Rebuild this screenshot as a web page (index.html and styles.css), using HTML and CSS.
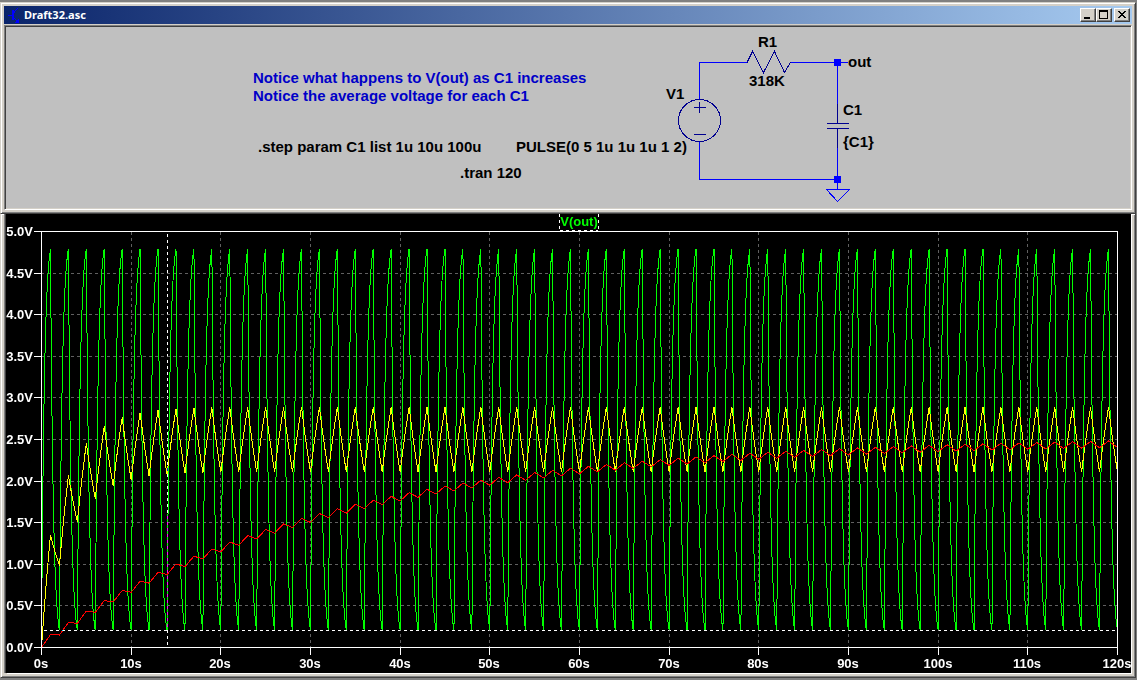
FILE: index.html
```html
<!DOCTYPE html>
<html lang="en">
<head>
  <meta charset="UTF-8">
  <meta name="viewport" content="width=device-width, initial-scale=1" />
  <title>Draft32.asc</title>
  <link rel="stylesheet" href="styles.css">
</head>
<body>
  <section class="window schematic-window">
    <header class="title-bar">
      <svg class="app-icon" width="12" height="16" viewBox="0 0 12 16" shape-rendering="crispEdges">
        <path d="M0 8.5H5M10 1L5 6.5M5 10L10 15" />
        <path class="thick" d="M5 3V13" />
        <path class="arrow" d="M11 16V12L7 15.5Z" />
      </svg>
      <h1>Draft32.asc</h1>
      <div class="window-buttons">
        <button type="button" aria-label="Minimize">
          <svg width="12" height="10" viewBox="0 0 12 10" shape-rendering="crispEdges"><path d="M2 7H8V9H2Z" /></svg>
        </button>
        <button type="button" aria-label="Maximize">
          <svg width="12" height="10" viewBox="0 0 12 10" shape-rendering="crispEdges"><path fill-rule="evenodd" d="M1 0H10V9H1ZM2 2V8H9V2Z" /></svg>
        </button>
        <button type="button" class="close" aria-label="Close">
          <svg width="12" height="10" viewBox="0 0 12 10" shape-rendering="crispEdges"><path d="M2 1H4V2H5V3H7V2H8V1H10V2H9V3H8V4H7V5H8V6H9V7H10V8H8V7H7V6H5V7H4V8H2V7H3V6H4V5H5V4H4V3H3V2H2Z" /></svg>
        </button>
      </div>
    </header>
    <div class="schematic">
      <svg class="circuit" width="680" height="182" viewBox="230 27 680 182" role="img" aria-label="RC circuit">
        <g class="comment">
          <text x="253" y="83">Notice what happens to V(out) as C1 increases</text>
          <text x="253" y="101">Notice the average voltage for each C1</text>
        </g>
        <g class="label">
          <text x="258" y="152">.step param C1 list 1u 10u 100u</text>
          <text x="516" y="152">PULSE(0 5 1u 1u 1u 1 2)</text>
          <text x="460" y="178">.tran 120</text>
          <text x="666" y="99">V1</text>
          <text x="758" y="47">R1</text>
          <text x="749" y="86">318K</text>
          <text x="848" y="67">out</text>
          <text x="843" y="115">C1</text>
          <text x="843" y="147">{C1}</text>
        </g>
        <!-- wires -->
        <path class="wire" d="M699.5 99V62.5H747M791 62.5H848M837.5 62V104M837.5 148V189M699.5 141V179.5H837" />
        <!-- R1, V1, C1 -->
        <path class="part" d="M747 62.5L752.5 51.5L763.5 72.5L774.5 51.5L784.5 72.5L790.5 62.5" />
        <circle class="part" cx="699.5" cy="120.5" r="21" />
        <path class="part" d="M694 107.5H706M699.5 102V113M694 134.5H706" />
        <path class="part" d="M837.5 104V123.5M827 123.5H849M827 128.5H849M837.5 128V148" />
        <path class="wire" d="M826.5 189.5H849.5L837.5 201.5Z" />
        <path class="node" d="M834 59H841V66H834ZM834 176H841V183H834Z" />
      </svg>
    </div>
  </section>

  <section class="window plot-window">
    <svg class="plot" viewBox="6 214 1125 459" role="img" aria-label="V(out) over time">
      <g id="grid"></g>
      <g id="traces"></g>
      <path class="axis" d="M41.5 231.5H1117.5V647.5H41.5Z" />
      <g id="axes"></g>
      <g class="cursor">
        <path d="M167.5 234V647" />
        <path d="M44 630.5H1117" />
      </g>
      <path class="trace-box" d="M559.5 214V230M598.5 214V230M560 230.5H598" />
      <text class="trace-name" x="579" y="226">V(out)</text>
    </svg>
  </section>

  <script>
    const left = 41.5;
    const bottom = 647.5;
    const pxPerSecond = 1076 / 120;
    const pxPerVolt = 416 / 5;
    const resistance = 318e3;

    const x = (t) => left + t * pxPerSecond;
    const y = (v) => bottom - v * pxPerVolt;

    const add = (parent, tag, attrs, text) => {
      const el = document.createElementNS('http://www.w3.org/2000/svg', tag);
      for (const key in attrs) el.setAttribute(key, attrs[key]);
      if (text) el.textContent = text;
      document.getElementById(parent).appendChild(el);
    };

    // RC response to a 5V square wave, 1s on and 1s off
    const response = (capacitance) => {
      const tau = resistance * capacitance;
      const steps = 20;
      const points = [`${x(0)},${y(0)}`];
      let start = 0;
      for (let second = 0; second < 120; second++) {
        const target = second % 2 === 0 ? 5 : 0;
        let v = start;
        for (let i = 1; i <= steps; i++) {
          v = target + (start - target) * Math.exp(-i / steps / tau);
          points.push(`${x(second + i / steps).toFixed(2)},${y(v).toFixed(2)}`);
        }
        start = v;
      }
      return points.join(' ');
    };

    for (let i = 0; i <= 10; i++) {
      const py = Math.floor(y(i / 2)) + 0.5;
      if (i > 0 && i < 10) add('grid', 'path', { d: `M41 ${py}H1117` });
      add('axes', 'path', { class: 'axis', d: `M34 ${py}H41` });
      add('axes', 'text', { class: 'volts', x: 33, y: Math.floor(py) + 5 }, `${(i / 2).toFixed(1)}V`);
    }

    for (let s = 0; s <= 120; s += 10) {
      const px = Math.floor(x(s)) + 0.5;
      if (s > 0 && s < 120) add('grid', 'path', { d: `M${px} 232V647` });
      add('axes', 'path', { class: 'axis', d: `M${px} 648V655` });
      add('axes', 'text', { class: 'seconds', x: Math.floor(px), y: 668 }, `${s}s`);
    }

    add('traces', 'polyline', { class: 'c-1u', points: response(1e-6) });
    add('traces', 'polyline', { class: 'c-10u', points: response(10e-6) });
    add('traces', 'polyline', { class: 'c-100u', points: response(100e-6) });
  </script>
</body>
</html>
```
FILE: styles.css
```css
* {
  box-sizing: border-box;
}

body {
  margin: 0;
  padding: 2px 1px 2px 0;
  min-height: 100vh;
  display: flex;
  flex-direction: column;
  background: #808080;
  font-family: "Liberation Sans", Arial, sans-serif;
}

.window {
  border: 1px solid #d4d0c8;
  border-right-color: #404040;
  border-bottom-color: #404040;
  background: #d4d0c8;
  box-shadow: inset 1px 1px #fff, inset -1px -1px #808080;
}

.schematic-window {
  padding: 3px;
}

.title-bar {
  height: 18px;
  display: flex;
  align-items: center;
  gap: 4px;
  padding: 0 2px 0 4px;
  background: linear-gradient(to right, #0a246a, #a6caf0);
}

.title-bar h1 {
  flex: 1;
  margin: 0;
  color: #fff;
  font: bold 11px/18px "Noto Sans", Tahoma, sans-serif;
}

.app-icon path {
  fill: none;
  stroke: #00f;
}

.app-icon .thick {
  stroke-width: 2;
}

.app-icon .arrow {
  fill: #00f;
  stroke: none;
}

.window-buttons {
  display: flex;
}

.window-buttons button {
  width: 16px;
  height: 14px;
  padding: 1px;
  border: 1px solid #fff;
  border-right-color: #404040;
  border-bottom-color: #404040;
  background: #d4d0c8;
  box-shadow: inset -1px -1px #808080;
}

.window-buttons svg {
  display: block;
}

.window-buttons .close {
  margin-left: 2px;
}

.schematic {
  margin-top: 1px;
  border: 1px solid #808080;
  border-right-color: #fff;
  border-bottom-color: #fff;
  padding: 1px 0 0 225px;
  background: #c0c0c0;
  box-shadow: inset 1px 1px #404040, inset -1px -1px #d4d0c8;
  overflow: hidden;
}

.circuit {
  display: block;
  shape-rendering: crispEdges;
}

.circuit text {
  font-size: 15px;
  font-weight: bold;
}

.comment {
  fill: #0000c8;
}

.wire,
.part {
  fill: none;
  stroke: #00f;
}

.part {
  stroke: #000090;
}

.node {
  fill: #00f;
}

.plot-window {
  flex: 1;
  display: flex;
  border-top: 0;
  padding: 0 4px 4px 5px;
}

.plot {
  flex: 1;
  min-width: 0;
  width: 100%;
  background: #000;
  box-shadow: 1px 1px #fff, -1px 0 #404040, -2px 0 #808080;
  shape-rendering: crispEdges;
  isolation: isolate;
}

.plot text {
  fill: #fff;
  font-size: 13px;
  font-weight: bold;
}

#grid path {
  stroke: #606060;
  stroke-dasharray: 3 3;
}

#traces polyline {
  fill: none;
}

.c-1u {
  stroke: #0f0;
}

.c-10u {
  stroke: #ff0;
}

.c-100u {
  stroke: #f00;
}

.axis {
  fill: none;
  stroke: #fff;
}

.volts {
  text-anchor: end;
}

.seconds,
.trace-name {
  text-anchor: middle;
}

/* inverts whatever trace lies under it */
.cursor {
  mix-blend-mode: difference;
}

.cursor path,
.trace-box {
  fill: none;
  stroke: #fff;
  stroke-dasharray: 3 3;
}

.plot .trace-name {
  fill: #0f0;
}
```
